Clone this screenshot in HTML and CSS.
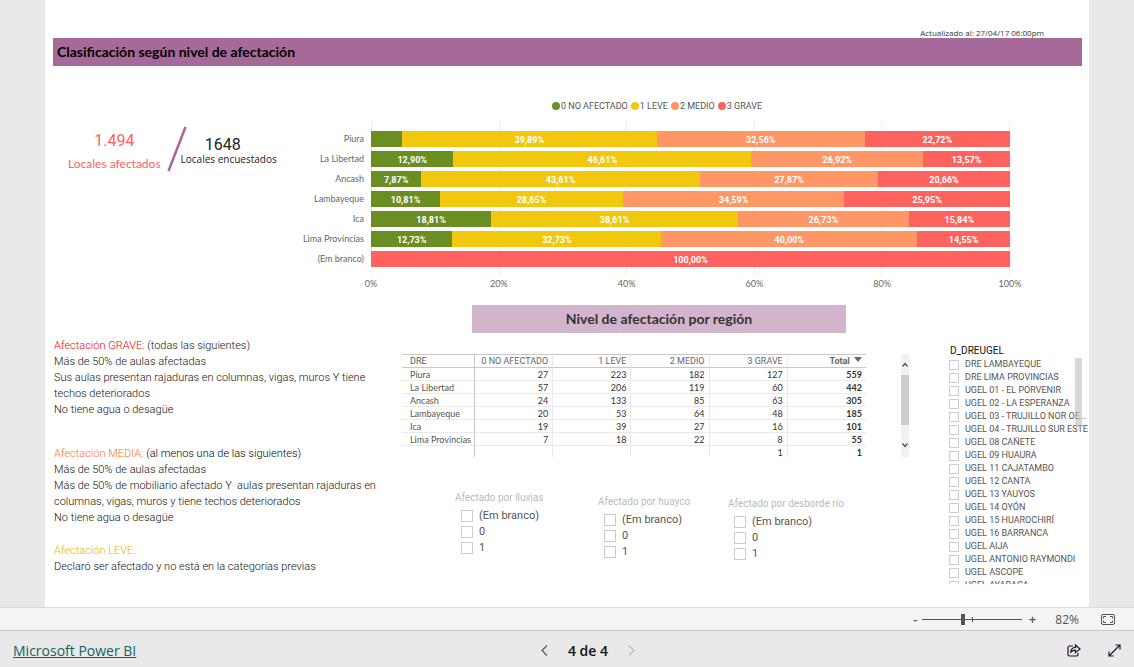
FILE: index.html
```html
<!DOCTYPE html>
<html lang="es">
<head>
<meta charset="utf-8">
<meta name="viewport" content="width=device-width, initial-scale=1">
<title>Clasificación según nivel de afectación</title>
<link rel="stylesheet" href="styles.css">
</head>
<body>
<main class="viewport">
  <div class="report">
    <p class="updated">Actualizado al: 27/04/17 06:00pm</p>
    <h1 class="banner">Clasificación según nivel de afectación</h1>

    <section class="overview">
      <div class="kpis">
        <div class="kpi kpi-affected"><strong>1.494</strong><span>Locales afectados</span></div>
        <svg class="slash" viewBox="0 0 20 46" aria-hidden="true"><path d="M18.500 1L1.500 45" stroke="#a66999" stroke-width="2.500"/></svg>
        <div class="kpi kpi-surveyed"><strong>1648</strong><span>Locales encuestados</span></div>
      </div>

      <div class="chart">
        <ul class="legend">
          <li><i class="dot none"></i>0 NO AFECTADO</li>
          <li><i class="dot low"></i>1 LEVE</li>
          <li><i class="dot mid"></i>2 MEDIO</li>
          <li><i class="dot high"></i>3 GRAVE</li>
        </ul>
        <div class="plot">
          <div class="names">
            <span>Piura</span><span>La Libertad</span><span>Ancash</span><span>Lambayeque</span><span>Ica</span><span>Lima Provincias</span><span>(Em branco)</span>
          </div>
          <div class="gridlines"><i></i><i></i><i></i><i></i><i></i></div>
          <div class="bars">
            <div class="bar"><span class="none" style="width:4.83%"></span><span class="low" style="width:39.89%">39,89%</span><span class="mid" style="width:32.56%">32,56%</span><span class="high" style="width:22.72%">22,72%</span></div>
            <div class="bar"><span class="none" style="width:12.9%">12,90%</span><span class="low" style="width:46.61%">46,61%</span><span class="mid" style="width:26.92%">26,92%</span><span class="high" style="width:13.57%">13,57%</span></div>
            <div class="bar"><span class="none" style="width:7.87%">7,87%</span><span class="low" style="width:43.61%">43,61%</span><span class="mid" style="width:27.87%">27,87%</span><span class="high" style="width:20.66%">20,66%</span></div>
            <div class="bar"><span class="none" style="width:10.81%">10,81%</span><span class="low" style="width:28.65%">28,65%</span><span class="mid" style="width:34.59%">34,59%</span><span class="high" style="width:25.95%">25,95%</span></div>
            <div class="bar"><span class="none" style="width:18.81%">18,81%</span><span class="low" style="width:38.61%">38,61%</span><span class="mid" style="width:26.73%">26,73%</span><span class="high" style="width:15.84%">15,84%</span></div>
            <div class="bar"><span class="none" style="width:12.73%">12,73%</span><span class="low" style="width:32.73%">32,73%</span><span class="mid" style="width:40%">40,00%</span><span class="high" style="width:14.55%">14,55%</span></div>
            <div class="bar"><span class="high" style="width:100%">100,00%</span></div>
          </div>
          <div class="axis"><span>0%</span><span>20%</span><span>40%</span><span>60%</span><span>80%</span><span>100%</span></div>
        </div>
      </div>
    </section>

    <section class="details">
      <div class="notes">
        <div class="note note-high">
          <p><b>Afectación GRAVE:</b> (todas las siguientes)</p>
          <p>Más de 50% de aulas afectadas</p>
          <p>Sus aulas presentan rajaduras en columnas, vigas, muros Y tiene techos deteriorados</p>
          <p>No tiene agua o desagüe</p>
        </div>
        <div class="note note-mid">
          <p><b>Afectación MEDIA:</b> <em>(al menos una de las siguientes)</em></p>
          <p>Más de 50% de aulas afectadas</p>
          <p>Más de 50% de mobiliario afectado Y&nbsp; aulas presentan rajaduras en columnas, vigas, muros y tiene techos deteriorados</p>
          <p>No tiene agua o desagüe</p>
        </div>
        <div class="note note-low">
          <p><b>Afectación LEVE:</b></p>
          <p>Declaró ser afectado y no está en la categorías previas</p>
        </div>
      </div>

      <div class="region">
        <h2 class="subtitle">Nivel de afectación por región</h2>
        <div class="matrix">
          <table>
            <thead>
              <tr><th scope="col">DRE</th><th scope="col">0 NO AFECTADO</th><th scope="col">1 LEVE</th><th scope="col">2 MEDIO</th><th scope="col">3 GRAVE</th><th scope="col">Total <svg class="sort" viewBox="0 0 8 5" aria-hidden="true"><path d="M0 0H8L4 5Z" fill="#666"/></svg></th></tr>
            </thead>
            <tbody>
              <tr><th scope="row">Piura</th><td>27</td><td>223</td><td>182</td><td>127</td><td>559</td></tr>
              <tr><th scope="row">La Libertad</th><td>57</td><td>206</td><td>119</td><td>60</td><td>442</td></tr>
              <tr><th scope="row">Ancash</th><td>24</td><td>133</td><td>85</td><td>63</td><td>305</td></tr>
              <tr><th scope="row">Lambayeque</th><td>20</td><td>53</td><td>64</td><td>48</td><td>185</td></tr>
              <tr><th scope="row">Ica</th><td>19</td><td>39</td><td>27</td><td>16</td><td>101</td></tr>
              <tr><th scope="row">Lima Provincias</th><td>7</td><td>18</td><td>22</td><td>8</td><td>55</td></tr>
              <tr><th scope="row"></th><td></td><td></td><td></td><td>1</td><td>1</td></tr>
            </tbody>
          </table>
          <div class="scrollbar">
            <svg viewBox="0 0 8 21" aria-hidden="true"><path d="M1.500 12.500L4 9.500L6.500 12.500" fill="none" stroke="#505050" stroke-width="1.200"/></svg>
            <div class="thumb"></div>
            <svg viewBox="0 0 8 21" aria-hidden="true"><path d="M1.500 8.500L4 11.500L6.500 8.500" fill="none" stroke="#505050" stroke-width="1.200"/></svg>
          </div>
        </div>
        <div class="filters">
          <fieldset class="filter">
            <legend>Afectado por lluvias</legend>
            <label><input type="checkbox">(Em branco)</label>
            <label><input type="checkbox">0</label>
            <label><input type="checkbox">1</label>
          </fieldset>
          <fieldset class="filter filter-huayco">
            <legend>Afectado por huayco</legend>
            <label><input type="checkbox">(Em branco)</label>
            <label><input type="checkbox">0</label>
            <label><input type="checkbox">1</label>
          </fieldset>
          <fieldset class="filter filter-river">
            <legend>Afectado por desborde río</legend>
            <label><input type="checkbox">(Em branco)</label>
            <label><input type="checkbox">0</label>
            <label><input type="checkbox">1</label>
          </fieldset>
        </div>
      </div>

      <fieldset class="ugel">
        <legend>D_DREUGEL</legend>
        <div class="ugel-list">
          <label><input type="checkbox"><span>DRE LAMBAYEQUE</span></label>
          <label><input type="checkbox"><span>DRE LIMA PROVINCIAS</span></label>
          <label><input type="checkbox"><span>UGEL 01 - EL PORVENIR</span></label>
          <label><input type="checkbox"><span>UGEL 02 - LA ESPERANZA</span></label>
          <label><input type="checkbox"><span>UGEL 03 - TRUJILLO NOR OE...</span></label>
          <label><input type="checkbox"><span>UGEL 04 - TRUJILLO SUR ESTE</span></label>
          <label><input type="checkbox"><span>UGEL 08 CAÑETE</span></label>
          <label><input type="checkbox"><span>UGEL 09 HUAURA</span></label>
          <label><input type="checkbox"><span>UGEL 11 CAJATAMBO</span></label>
          <label><input type="checkbox"><span>UGEL 12 CANTA</span></label>
          <label><input type="checkbox"><span>UGEL 13 YAUYOS</span></label>
          <label><input type="checkbox"><span>UGEL 14 OYÓN</span></label>
          <label><input type="checkbox"><span>UGEL 15 HUAROCHIRÍ</span></label>
          <label><input type="checkbox"><span>UGEL 16 BARRANCA</span></label>
          <label><input type="checkbox"><span>UGEL AIJA</span></label>
          <label><input type="checkbox"><span>UGEL ANTONIO RAYMONDI</span></label>
          <label><input type="checkbox"><span>UGEL ASCOPE</span></label>
          <label><input type="checkbox"><span>UGEL AYABACA</span></label>
          <div class="ugel-thumb"></div>
        </div>
      </fieldset>
    </section>
  </div>
</main>

<div class="zoombar">
  <button type="button" class="step" aria-label="Reducir">-</button>
  <input class="zoom" type="range" min="0" max="100" value="40" aria-label="Zoom">
  <button type="button" class="step" aria-label="Ampliar">+</button>
  <span class="percent">82%</span>
  <button type="button" class="icon" aria-label="Ajustar a la página">
    <svg width="14" height="11" viewBox="0 0 14 11" fill="none" stroke="#555"><rect x=".5" y=".5" width="13" height="10" rx="1.500"/><path d="M5 2.500H2.500V4.500M2.500 6.500V8.500H5M9 2.500H11.500V4.500M11.500 6.500V8.500H9"/></svg>
  </button>
</div>

<footer class="footer">
  <div class="brand"><a href="#">Microsoft Power BI</a></div>
  <nav class="pager" aria-label="Páginas">
    <button type="button" class="icon" aria-label="Anterior"><svg width="7" height="11" viewBox="0 0 7 11" fill="none" stroke="#3f6267" stroke-width="1.200"><path d="M6 .5L1 5.500L6 10.500"/></svg></button>
    <span>4 de 4</span>
    <button type="button" class="icon" aria-label="Siguiente" disabled><svg width="7" height="11" viewBox="0 0 7 11" fill="none" stroke="#bdbdbd" stroke-width="1.200"><path d="M1 .5L6 5.500L1 10.500"/></svg></button>
  </nav>
  <div class="actions">
    <button type="button" class="icon" aria-label="Compartir"><svg width="14" height="13" viewBox="0 0 14 13" fill="none" stroke="#24102c" stroke-width="1.200"><path d="M6 2H2.500Q1 2 1 3.500V10.500Q1 12 2.500 12H9.500Q11 12 11 10.500V9"/><path d="M3.800 8Q4.200 3.600 8.500 3.400V1L13 5L8.500 8.600V6.200Q5.500 6.200 3.800 8Z"/></svg></button>
    <button type="button" class="icon" aria-label="Pantalla completa"><svg width="13" height="13" viewBox="0 0 13 13" fill="none" stroke="#24102c" stroke-width="1.200"><path d="M1 12L12 1M7.500 1H12V5.500M1 7.500V12H5.500"/></svg></button>
  </div>
</footer>
</body>
</html>
```
FILE: styles.css
```css
* {
  box-sizing: border-box;
}

body {
  margin: 0;
  min-height: 100vh;
  display: flex;
  flex-direction: column;
  background: #e9e9e9;
  color: #333;
  font-family: Lato, "Noto Sans", sans-serif;
  font-size: 9px;
}

p, h1, h2, ul, fieldset, legend {
  margin: 0;
  padding: 0;
}

fieldset {
  border: 0;
  min-width: 0;
}

button {
  padding: 0;
  border: 0;
  background: none;
  font: inherit;
  color: inherit;
}

.icon {
  display: flex;
}

.viewport {
  flex: 1;
  padding: 0 45px;
}

.report {
  height: 100%;
  padding: 27px 7px 23px 8px;
  background: #fff;
}

.updated {
  padding-right: 38px;
  text-align: right;
  font-family: "Open Sans", sans-serif;
  font-size: 8px;
  line-height: 11px;
  color: #333;
}

.banner {
  padding-left: 4px;
  background: #a66999;
  color: #000;
  font-size: 14px;
  font-weight: 700;
  line-height: 28px;
}

.overview {
  display: grid;
  grid-template-columns: 251fr 706fr 72fr;
  padding-bottom: 15px;
}

.kpis {
  display: flex;
  align-items: flex-start;
  padding: 60px 0 0 15px;
}

.kpi {
  display: flex;
  flex-direction: column;
  text-align: center;
  white-space: nowrap;
}

.kpi strong {
  font-family: Roboto, sans-serif;
  font-size: 16px;
  font-weight: 400;
}

.kpi-affected {
  padding-top: 3px;
  color: #fd625e;
  font-size: 12px;
  line-height: 23px;
}

.slash {
  width: 20px;
  height: 46px;
  margin-left: 6px;
}

.kpi-surveyed {
  margin-left: -6px;
  padding-top: 11px;
  color: #222;
  font-family: "Open Sans", sans-serif;
  font-size: 10px;
  line-height: 15px;
}

.kpi-surveyed strong {
  padding-right: 12px;
}

.chart {
  padding-top: 34px;
}

.legend {
  display: flex;
  justify-content: center;
  gap: 3px;
  list-style: none;
  font-family: Roboto, sans-serif;
  line-height: 12px;
  color: #555;
}

.legend li {
  display: flex;
  align-items: center;
  gap: 1px;
}

.dot {
  width: 8px;
  height: 8px;
  border-radius: 50%;
}

.none {
  background: #6b8e23;
}

.low {
  background: #f2c80f;
}

.mid {
  background: #ff9666;
}

.high {
  background: #fd625e;
}

.plot {
  display: grid;
  grid-template-columns: 60px 1fr;
  column-gap: 7px;
  margin-top: 10px;
  color: #666;
}

.names {
  display: flex;
  flex-direction: column;
  align-items: flex-end;
  padding: 7px 0;
  line-height: 20px;
  white-space: nowrap;
}

.gridlines {
  grid-area: 1 / 2;
  display: flex;
  border-right: 1px solid #eee;
}

.gridlines i {
  flex: 1;
  border-left: 1px solid #eee;
}

.bars {
  grid-area: 1 / 2;
  padding: 7px 0;
}

.bar {
  display: flex;
  height: 20px;
  padding: 2px 0;
}

.bar span {
  overflow: hidden;
  text-align: center;
  font-family: Roboto, sans-serif;
  font-weight: 700;
  line-height: 18px;
  color: #fff;
}

.axis {
  grid-column: 2;
  display: flex;
  justify-content: space-between;
  margin-top: 2px;
  line-height: 12px;
}

.axis span {
  display: flex;
  justify-content: center;
  width: 0;
}

.details {
  display: grid;
  grid-template-columns: 347fr 549fr 133fr;
}

.notes {
  padding: 33px 16px 0 1px;
  font-family: Roboto, sans-serif;
  font-size: 11px;
  font-weight: 300;
  line-height: 16px;
  color: #111;
}

.note b {
  font-weight: 300;
}

.note em {
  font-style: normal;
  color: #000;
}

.note-high b {
  color: #fd0000;
}

.note-mid {
  margin-top: 28px;
}

.note-mid b {
  color: #ff7033;
}

.note-low {
  margin-top: 17px;
}

.note-low b {
  color: #e8b400;
}

.subtitle {
  margin: 0 103px 0 72px;
  background: #d2b4cc;
  color: #333;
  font-size: 14px;
  font-weight: 700;
  line-height: 28px;
  text-align: center;
}

.matrix {
  display: flex;
  align-items: flex-start;
  gap: 35px;
  height: 103px;
  margin: 21px 40px 0 2px;
  overflow: hidden;
}

table {
  flex: 1;
  width: 100%;
  table-layout: fixed;
  border-spacing: 0;
  line-height: 11px;
  white-space: nowrap;
}

th, td {
  padding: 1px 4px 0 0;
  border-right: 1px solid #eaeaea;
  border-bottom: 1px solid #eaeaea;
  font-weight: 400;
  text-align: right;
}

td {
  height: 13px;
}

thead th {
  border-top: 1px solid #c8c8c8;
  border-bottom-color: #c8c8c8;
  color: #666;
  font-family: Roboto, sans-serif;
}

th:first-child {
  width: 73px;
  padding: 1px 0 0 8px;
  border-right-color: #c8c8c8;
  text-align: left;
  color: #555;
}

th:last-child, td:last-child {
  border-right: 0;
  font-weight: 700;
}

.sort {
  width: 8px;
  height: 5px;
  margin-left: 2px;
  vertical-align: 2px;
}

.scrollbar {
  flex: none;
  display: flex;
  flex-direction: column;
  width: 8px;
  height: 103px;
  background: #f1f1f1;
}

.scrollbar svg {
  height: 21px;
}

.scrollbar .thumb {
  height: 50px;
  margin-bottom: 10px;
  background: #cdcdcd;
}

.filters {
  display: grid;
  grid-template-columns: 143fr 130fr 221fr;
  padding: 34px 0 0 55px;
  font-family: Roboto, sans-serif;
}

.filter legend {
  margin-bottom: 4px;
  color: #bbb;
  font-size: 10px;
  line-height: 13px;
  white-space: nowrap;
}

.filter label {
  display: flex;
  align-items: center;
  gap: 6px;
  padding-left: 6px;
  font-size: 11px;
  line-height: 16px;
  color: #555;
}

.filter-huayco {
  margin-top: 4px;
}

.filter-river {
  margin-top: 6px;
}

input[type="checkbox"] {
  appearance: none;
  flex: none;
  width: 12px;
  height: 12px;
  margin: 0;
  border: 1px solid #ccc;
  background: #fff;
}

.ugel {
  padding-top: 39px;
  color: #555;
  font-family: Roboto, sans-serif;
}

.ugel legend {
  float: left;
  width: 100%;
  padding-left: 1px;
  color: #111;
  font-size: 10px;
  line-height: 14px;
}

.ugel-list {
  position: relative;
  clear: both;
  height: 226px;
  margin-right: -6px;
  overflow: hidden;
}

.ugel-list label {
  display: flex;
  align-items: center;
  gap: 6px;
  line-height: 13px;
  white-space: nowrap;
}

.ugel-list input[type="checkbox"] {
  width: 10px;
  height: 10px;
}

.ugel-thumb {
  position: absolute;
  top: 0;
  right: 6px;
  width: 7px;
  height: 69px;
  background: rgba(190, 190, 190, 0.6);
}

.zoombar {
  display: flex;
  align-items: center;
  justify-content: flex-end;
  height: 24px;
  padding-right: 19px;
  border-top: 1px solid #dcdcdc;
  border-bottom: 1px solid #c8c8c8;
  background: #f4f4f4;
  color: #555;
  font-family: "Open Sans", sans-serif;
}

.step {
  width: 8px;
  font-size: 13px;
  font-weight: 600;
  line-height: 20px;
}

.zoom {
  appearance: none;
  width: 100px;
  height: 12px;
  margin: 0 6px 0 3px;
  background:
    linear-gradient(#555, #555) 50px 4px / 1px 5px no-repeat,
    linear-gradient(#555, #555) 0 6px / 100% 1px no-repeat;
}

.zoom::-webkit-slider-thumb {
  appearance: none;
  width: 4px;
  height: 11px;
  background: #555;
}

.percent {
  margin: 0 22px 0 19px;
  font-size: 12px;
}

.footer {
  display: grid;
  grid-template-columns: 1fr auto 1fr;
  align-items: center;
  height: 36px;
  padding: 2px 13px 0;
  background: #e9e9e9;
  font-family: "Open Sans", sans-serif;
  font-size: 14px;
}

.brand a {
  color: #0f6560;
}

.pager {
  display: flex;
  align-items: center;
  gap: 20px;
  padding-left: 42px;
  color: #111;
  font-weight: 600;
}

.actions {
  display: flex;
  justify-content: flex-end;
  align-items: center;
  gap: 27px;
}
```
